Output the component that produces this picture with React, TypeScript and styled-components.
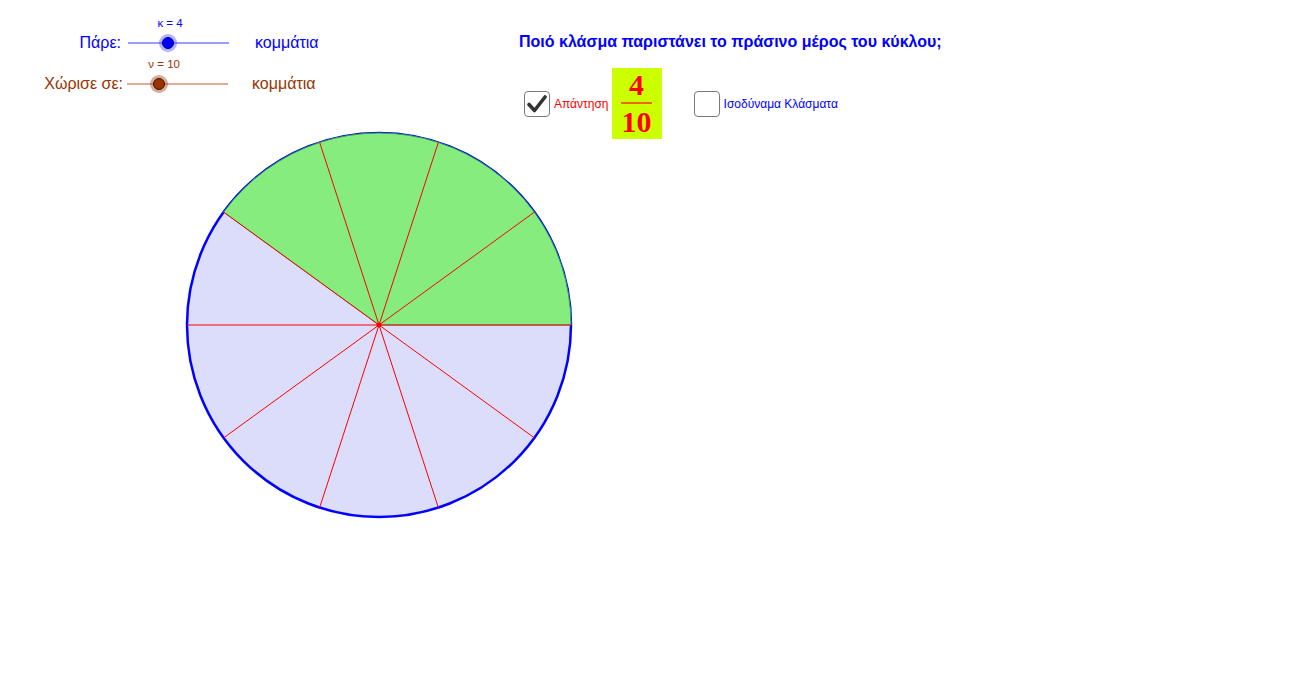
import React from "react";
import styled, { createGlobalStyle } from "styled-components";

const Global = createGlobalStyle`
  html, body { margin: 0; padding: 0; background: #ffffff; }
  body { font-family: "Liberation Sans", Arial, sans-serif; }
`;

const Page = styled.div`
  width: 1296px;
  height: 679px;
  display: flex;
  flex-direction: column;
  overflow: hidden;
  background: #ffffff;
`;

const Top = styled.div`
  height: 130px;
  display: flex;
  align-items: flex-start;
`;

const Sliders = styled.div`
  width: 519px;
  flex: none;
  padding-top: 22.5px;
  display: flex;
  flex-direction: column;
`;

const SliderRow = styled.div<{ $color: string }>`
  height: 41px;
  display: flex;
  align-items: center;
  color: ${(p) => p.$color};
  font-size: 16px;
`;

const RowLabel = styled.div<{ $pad: number }>`
  width: 123px;
  box-sizing: border-box;
  padding-right: ${(p) => p.$pad}px;
  text-align: right;
  white-space: nowrap;
`;

const Track = styled.div<{ $gap: number; $track: string }>`
  position: relative;
  width: 101px;
  height: 2px;
  margin-left: ${(p) => p.$gap}px;
  background: ${(p) => p.$track};
`;

const Knob = styled.div<{ $fill: string; $halo: string; $edge: string }>`
  position: absolute;
  top: 50%;
  width: 10px;
  height: 10px;
  border-radius: 50%;
  background: ${(p) => p.$fill};
  border: 1.5px solid ${(p) => p.$edge};
  box-shadow: 0 0 0 3px ${(p) => p.$halo};
  transform: translate(-50%, -50%);
`;

const ValueLabel = styled.div`
  position: absolute;
  bottom: 14px;
  font-size: 11.5px;
  white-space: nowrap;
  line-height: 13px;
`;

const Unit = styled.div<{ $gap: number }>`
  margin-left: ${(p) => p.$gap}px;
  white-space: nowrap;
`;

const Right = styled.div`
  padding-top: 33px;
  display: flex;
  flex-direction: column;
`;

const Question = styled.div`
  color: #0000ff;
  font-weight: bold;
  font-size: 16px;
  line-height: 18px;
  white-space: nowrap;
`;

const Options = styled.div`
  margin-top: 17px;
  display: flex;
  align-items: center;
`;

const CheckBox = styled.div<{ $lead: number }>`
  width: 26px;
  height: 26px;
  box-sizing: border-box;
  margin-left: ${(p) => p.$lead}px;
  border: 1.5px solid #7b7b7b;
  border-radius: 4px;
  background: #ffffff;
  display: flex;
  align-items: center;
  justify-content: center;
`;

const OptionText = styled.span<{ $color: string }>`
  margin-left: 4px;
  color: ${(p) => p.$color};
  font-size: 12px;
  white-space: nowrap;
`;

const FractionBox = styled.div`
  margin-left: 3px;
  width: 50px;
  height: 71px;
  background: #ccff00;
  display: flex;
  flex-direction: column;
  align-items: center;
  justify-content: center;
  font-family: "Liberation Serif", "Times New Roman", serif;
  font-weight: bold;
  font-size: 30px;
  color: #ff0000;
  line-height: 32px;
`;

const FracLine = styled.div`
  width: 31px;
  height: 2px;
  background: #e66a00;
  margin: 1px 0 2px;
`;

const CircleWrap = styled.div`
  padding-left: 184px;
`;

type SliderProps = {
  label: string;
  value: string;
  frac: number;
  color: string;
  track: string;
  fill: string;
  halo: string;
  edge: string;
  labelPad: number;
  gap: number;
  unitGap: number;
};

function Slider(p: SliderProps) {
  const x = p.frac * 101;
  return (
    <SliderRow $color={p.color}>
      <RowLabel $pad={p.labelPad}>{p.label}</RowLabel>
      <Track $gap={p.gap} $track={p.track}>
        <ValueLabel style={{ left: x - 11 }}>{p.value}</ValueLabel>
        <Knob style={{ left: x }} $fill={p.fill} $halo={p.halo} $edge={p.edge} />
      </Track>
      <Unit $gap={p.unitGap}>κομμάτια</Unit>
    </SliderRow>
  );
}

function Pie() {
  const cx = 195;
  const cy = 195;
  const r = 192;
  const n = 10;
  const k = 4;
  const pt = (deg: number) => {
    const a = (deg * Math.PI) / 180;
    return [cx + r * Math.cos(a), cy - r * Math.sin(a)];
  };
  const step = 360 / n;
  const [gx0, gy0] = pt(0);
  const [gx1, gy1] = pt(k * step);
  const green = `M ${cx} ${cy} L ${gx0} ${gy0} A ${r} ${r} 0 ${k * step > 180 ? 1 : 0} 0 ${gx1} ${gy1} Z`;
  const rest = `M ${cx} ${cy} L ${gx1} ${gy1} A ${r} ${r} 0 ${360 - k * step > 180 ? 1 : 0} 0 ${gx0} ${gy0} Z`;
  const spokes = Array.from({ length: n }, (_, i) => pt(i * step));
  return (
    <svg width="390" height="390" viewBox="0 0 390 390">
      <path d={rest} fill="#dcdcfb" />
      <circle cx={cx} cy={cy} r={r} fill="none" stroke="#0000ff" strokeWidth="2.5" />
      <path d={green} fill="#87ec7e" stroke="#2e9e4a" strokeWidth="1" />
      {spokes.map(([x, y], i) => (
        <line key={i} x1={cx} y1={cy} x2={x} y2={y} stroke="#ff0000" strokeWidth="1" />
      ))}
      <circle cx={cx} cy={cy} r="2.5" fill="#ff0000" />
    </svg>
  );
}

export default function App() {
  return (
    <Page>
      <Global />
      <Top>
        <Sliders>
          <Slider
            label="Πάρε:"
            value="κ = 4"
            frac={0.4}
            color="#0000ff"
            track="#9d9dff"
            fill="#0000ff"
            halo="rgba(60,60,255,0.4)"
            edge="#000066"
            labelPad={2}
            gap={5}
            unitGap={26}
          />
          <Slider
            label="Χώρισε σε:"
            value="ν = 10"
            frac={0.32}
            color="#993300"
            track="#e3ab96"
            fill="#993300"
            halo="rgba(153,51,0,0.4)"
            edge="#3a1400"
            labelPad={0}
            gap={4}
            unitGap={24}
          />
        </Sliders>
        <Right>
          <Question>Ποιό κλάσμα παριστάνει το πράσινο μέρος του κύκλου;</Question>
          <Options>
            <CheckBox $lead={5}>
              <svg width="20" height="18" viewBox="0 0 20 18">
                <path d="M2 9.5 L7.5 15.5 L18 2" fill="none" stroke="#333333" strokeWidth="3.6" strokeLinecap="round" strokeLinejoin="round" />
              </svg>
            </CheckBox>
            <OptionText $color="#ff0000">Απάντηση</OptionText>
            <FractionBox>
              <span>4</span>
              <FracLine />
              <span>10</span>
            </FractionBox>
            <CheckBox $lead={32} />
            <OptionText $color="#0000ff">Ισοδύναμα Κλάσματα</OptionText>
          </Options>
        </Right>
      </Top>
      <CircleWrap>
        <Pie />
      </CircleWrap>
    </Page>
  );
}
